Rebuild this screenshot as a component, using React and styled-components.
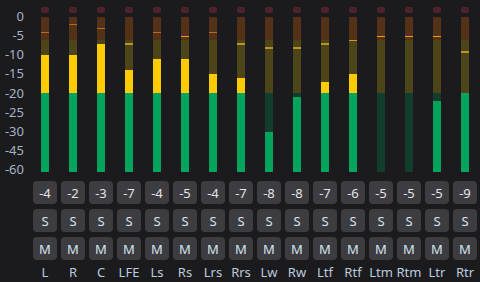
import React from 'react'
import styled, { createGlobalStyle } from 'styled-components';

const GlobalStyle = createGlobalStyle`
  body {
    margin: 0;
    background: #1b1b1d;
    font-family: "Noto Sans", "Open Sans", sans-serif;
  }
`;

const BAR_TOP = 17;
const BAR_H = 155;
const OLIVE_Y = 23;
const GREEN_Y = 76;

const Page = styled.div`
  width: 480px;
  height: 282px;
  display: flex;
  padding-top: 7px;
  box-sizing: border-box;
  background: #1b1b1d;
  overflow: hidden;
`;

const Scale = styled.div`
  width: 31px;
  height: 167px;
  margin-top: 2px;
  padding-right: 7px;
  box-sizing: border-box;
  display: flex;
  flex-direction: column;
  justify-content: space-between;
  align-items: flex-end;
`;

const ScaleLabel = styled.span`
  font-size: 13px;
  line-height: 14px;
  color: #a7b3c4;
`;

const Channels = styled.div`
  display: flex;
`;

const Channel = styled.div`
  width: 28px;
  display: flex;
  flex-direction: column;
  align-items: center;
`;

const Clip = styled.div`
  width: 8px;
  height: 6px;
  border-radius: 2px;
  background: #4c2329;
  margin-bottom: 4px;
`;

const Bar = styled.div`
  position: relative;
  width: 8px;
  height: ${BAR_H}px;
  border-radius: 1px;
  overflow: hidden;
  background: linear-gradient(
    to bottom,
    #533218 0 ${OLIVE_Y}px,
    #4e4419 ${OLIVE_Y}px ${GREEN_Y}px,
    #123c2b ${GREEN_Y}px
  );
`;

const Fill = styled.div`
  position: absolute;
  left: 0;
  right: 0;
  bottom: 0;
  background: linear-gradient(
      to bottom,
      #ffcc00 0 ${GREEN_Y}px,
      #00a45c ${GREEN_Y}px
    )
    bottom / 100% ${BAR_H}px no-repeat;
`;

const Peak = styled.div`
  position: absolute;
  left: 0;
  right: 0;
  height: ${p => p.$thick ? 2 : 1}px;
  background: ${p => p.$color};
`;

const Controls = styled.div`
  margin-top: 9px;
  display: flex;
  flex-direction: column;
  gap: 5px;
`;

const Box = styled.div`
  width: 24px;
  height: 23px;
  border-radius: 4px;
  background: #3d3d41;
  display: flex;
  align-items: center;
  justify-content: center;
  font-size: 13px;
  color: ${p => p.$value ? '#e4e4e4' : '#d6e2f0'};
`;

const Name = styled.div`
  margin-top: 5px;
  font-size: 13px;
  line-height: 14px;
  color: #bccbdd;
  white-space: nowrap;
`;

const scale = ['0', '-5', '-10', '-15', '-20', '-25', '-30', '-45', '-60'];

const channels = [
  { name: 'L', val: '-4', level: 55, peak: 32 },
  { name: 'R', val: '-2', level: 55, peak: 24 },
  { name: 'C', val: '-3', level: 44, peak: 28 },
  { name: 'LFE', val: '-7', level: 70, peak: 43 },
  { name: 'Ls', val: '-4', level: 59, peak: 32 },
  { name: 'Rs', val: '-5', level: 59, peak: 36 },
  { name: 'Lrs', val: '-4', level: 74, peak: 32 },
  { name: 'Rrs', val: '-7', level: 78, peak: 43 },
  { name: 'Lw', val: '-8', level: 132, peak: 47 },
  { name: 'Rw', val: '-8', level: 97, peak: 47 },
  { name: 'Ltf', val: '-7', level: 82, peak: 43 },
  { name: 'Rtf', val: '-6', level: 74, peak: 40 },
  { name: 'Ltm', val: '-5', level: 172, peak: 36 },
  { name: 'Rtm', val: '-5', level: 172, peak: 36 },
  { name: 'Ltr', val: '-5', level: 101, peak: 36 },
  { name: 'Rtr', val: '-9', level: 93, peak: 51 },
];

const peakStyle = (y) => {
  const rel = y - BAR_TOP;
  if (rel < OLIVE_Y) return { color: rel === 19 ? '#f2a000' : '#b8691a', thick: false };
  if (rel === OLIVE_Y) return { color: '#d89a10', thick: false };
  return { color: '#b8961c', thick: true };
};

const Meter = ({ level, peak }) => {
  const p = peakStyle(peak);
  return (
    <Bar>
      <Fill style={{ height: BAR_TOP + BAR_H - level }} />
      <Peak $color={p.color} $thick={p.thick} style={{ top: peak - BAR_TOP }} />
    </Bar>
  );
};

const App = () => (
  <Page>
    <GlobalStyle />
    <Scale>
      {scale.map(s => <ScaleLabel key={s}>{s}</ScaleLabel>)}
    </Scale>
    <Channels>
      {channels.map(c => (
        <Channel key={c.name}>
          <Clip />
          <Meter level={c.level} peak={c.peak} />
          <Controls>
            <Box $value>{c.val}</Box>
            <Box>S</Box>
            <Box>M</Box>
          </Controls>
          <Name>{c.name}</Name>
        </Channel>
      ))}
    </Channels>
  </Page>
)

export default App
